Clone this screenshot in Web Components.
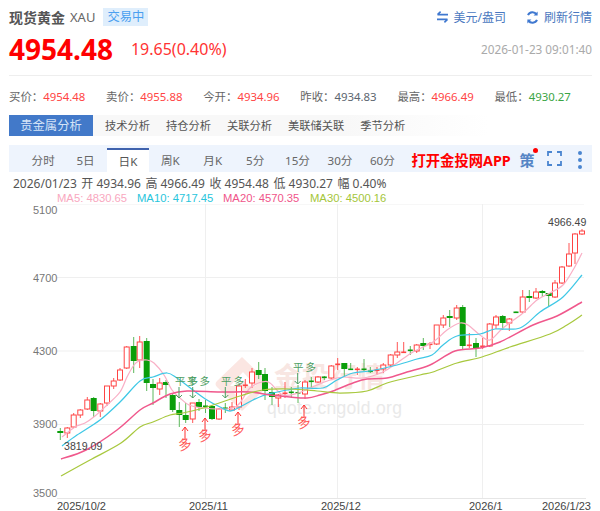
<!DOCTYPE html>
<html lang="zh">
<head>
<meta charset="utf-8">
<title>现货黄金</title>
<style>
  html, body { margin: 0; background: #fff; }
  body { width: 600px; height: 511px; overflow: hidden; font-family: "Noto Sans", "Noto Sans CJK SC", sans-serif; }
</style>
</head>
<body>
<quote-page>
  <quote-header></quote-header>
  <stat-row>
    <stat-item label="买价" value="4954.48" tone="up"></stat-item>
    <stat-item label="卖价" value="4955.88" tone="up"></stat-item>
    <stat-item label="今开" value="4934.96" tone="up"></stat-item>
    <stat-item label="昨收" value="4934.83"></stat-item>
    <stat-item label="最高" value="4966.49" tone="up"></stat-item>
    <stat-item label="最低" value="4930.27" tone="down"></stat-item>
  </stat-row>
  <analysis-tabs></analysis-tabs>
  <period-bar></period-bar>
  <kline-legend></kline-legend>
  <kline-chart></kline-chart>
</quote-page>
<script>
class quotePage extends HTMLElement {
    connectedCallback() {
        const shadowRoot = this.attachShadow({mode: 'open'});
        shadowRoot.innerHTML = `<style>
          :host{ display: block; width: 600px; height: 511px; }
        </style><slot></slot>`;
    }
}

class quoteHeader extends HTMLElement {
    connectedCallback() {
        const shadowRoot = this.attachShadow({mode: 'open'});
        shadowRoot.innerHTML = `<style>
          :host{ display: block; margin: 0 8px 0 9px; height: 75px; box-sizing: content-box; border-bottom: 1px solid #eee; }
          .top, .mid{ display: flex; align-items: center; }
          .top{ height: 18px; padding-top: 8px; }
          .mid{ height: 30px; padding-top: 8px; }
          .name{ font-size: 14px; font-weight: 700; color: #555; }
          .code{ font-size: 13px; color: #666; margin-left: 5px; }
          .badge{ font-size: 12.3px; color: #4a9ff0; background: #dfeefc; height: 18px; line-height: 18px; padding: 0 4px; margin-left: 8px; }
          .actions{ margin-left: auto; display: flex; align-items: center; font-size: 12px; color: #4a78c0; }
          .actions svg{ display: block; margin-right: 5px; }
          .actions span + svg{ margin-left: 20px; }
          .price{ font-size: 28px; font-weight: 700; color: #f00; line-height: 30px; }
          .change{ font-size: 16px; color: #f33; margin-left: 18px; }
          .time{ margin-left: auto; font-size: 11.75px; color: #aaa; }
        </style>
        <div class="top">
          <span class="name">现货黄金</span><span class="code">XAU</span><span class="badge">交易中</span>
          <div class="actions">
            <svg width="13" height="12" viewBox="0 0 13 12" fill="none" stroke="#3f78d0" stroke-width="1.6"><path d="M12 3.6H1.5M4.6 .6 1.5 3.6"/><path d="M1 8.4h10.5M8.4 11.4l3.1-3"/></svg>
            <span>美元/盎司</span>
            <svg width="13" height="13" viewBox="0 0 13 13" fill="none" stroke="#3f78d0" stroke-width="2"><path d="M2 4.2A5 5 0 0 1 10.6 3.4"/><path d="M11 8.8A5 5 0 0 1 2.4 9.6"/><path d="M11.6 .4v4.2H7.6z" fill="#3f78d0" stroke="none"/><path d="M1.4 12.6V8.4h4z" fill="#3f78d0" stroke="none"/></svg>
            <span>刷新行情</span>
          </div>
        </div>
        <div class="mid">
          <span class="price">4954.48</span><span class="change">19.65(0.40%)</span><span class="time">2026-01-23 09:01:40</span>
        </div>`;
    }
}

class statRow extends HTMLElement {
    connectedCallback() {
        const shadowRoot = this.attachShadow({mode: 'open'});
        shadowRoot.innerHTML = `<style>
          :host{ display: grid; grid-template-columns: repeat(6, 97.1px); margin-left: 9px; height: 39px; align-items: center; }
        </style><slot></slot>`;
    }
}

class statItem extends HTMLElement {
    connectedCallback() {
        const tones = { up: '#f44', down: '#3aa544' };
        const color = tones[this.getAttribute('tone')] || '#5c6670';
        const shadowRoot = this.attachShadow({mode: 'open'});
        shadowRoot.innerHTML = `<style>
          :host{ display: block; font-size: 11.4px; color: #666; white-space: nowrap; }
          b{ font-weight: 400; color: ${color}; }
        </style>${this.getAttribute('label')}：<b>${this.getAttribute('value')}</b>`;
    }
}

class analysisTabs extends HTMLElement {
    connectedCallback() {
        const tabs = ['技术分析', '持仓分析', '关联分析', '美联储关联', '季节分析'];
        const shadowRoot = this.attachShadow({mode: 'open'});
        shadowRoot.innerHTML = `<style>
          :host{ display: flex; margin-left: 9px; height: 21px; width: 480px; background: linear-gradient(90deg, #f8f8f8 70%, #fff); }
          .on{ width: 84px; background: #4279c9; color: #d5e4f7; font-size: 12.3px; line-height: 21px; text-align: center; margin-right: 12px; }
          .t{ font-size: 11.25px; line-height: 21px; color: #555; margin-right: 16px; white-space: nowrap; }
        </style>
        <div class="on">贵金属分析</div>${tabs.map(t => `<div class="t">${t}</div>`).join('')}`;
    }
}

class periodBar extends HTMLElement {
    connectedCallback() {
        const items = ['分时', '5日', '日K', '周K', '月K', '5分', '15分', '30分', '60分'];
        const shadowRoot = this.attachShadow({mode: 'open'});
        shadowRoot.innerHTML = `<style>
          :host{ display: flex; align-items: stretch; margin: 9px 8px 0 9px; height: 27px; padding-left: 13px; background: #eef4fd; font-size: 11.6px; color: #666; }
          .p{ width: 42.4px; text-align: center; line-height: 31px; box-sizing: border-box; }
          .p.on{ background: #fff; border-top: 2px solid #3f62ad; margin-top: 3px; line-height: 24px; color: #555; }
          .app{ margin-left: 8px; width: 108px; font-size: 14.3px; font-weight: 700; color: #f00; line-height: 31px; white-space: nowrap; }
          .ce{ position: relative; color: #5585c5; font-size: 15px; font-weight: 700; line-height: 31px; width: 27px; }
          .dot{ position: absolute; left: 13px; top: 3px; width: 5px; height: 5px; border-radius: 50%; background: #f00; }
          svg{ display: block; margin-top: 6px; }
        </style>
        ${items.map(t => `<div class="p${t === '日K' ? ' on' : ''}">${t}</div>`).join('')}
        <div class="app">打开金投网APP</div>
        <div class="ce">策<span class="dot"></span></div>
        <svg width="15" height="15" viewBox="0 0 15 15" fill="none" stroke="#4a85d0" stroke-width="1.8"><path d="M1 5V1h4M10 1h4v4M14 10v4h-4M5 14H1v-4"/></svg>
        <svg width="20" height="18" viewBox="0 0 20 18" fill="#4a85d0" style="margin-left:8px"><circle cx="10" cy="2" r="2"/><circle cx="10" cy="9" r="2"/><circle cx="10" cy="16" r="2"/></svg>`;
    }
}

class klineLegend extends HTMLElement {
    connectedCallback() {
        const shadowRoot = this.attachShadow({mode: 'open'});
        shadowRoot.innerHTML = `<style>
          :host{ display: block; height: 32px; box-sizing: border-box; padding-top: 4px; color: #555; white-space: nowrap; }
          .ohlc{ padding-left: 13px; font-size: 12px; line-height: 16px; display: flex; gap: 4.5px; }
          .ma{ position: relative; height: 12px; padding-left: 57px; display: flex; font: 11.25px/12px "Liberation Sans", sans-serif; }
          .ma span{ display: block; }
          .ma span:nth-child(1){ color: #f9a8c0; width: 80px; }
          .ma span:nth-child(2){ color: #28c5dc; width: 86px; }
          .ma span:nth-child(3){ color: #f0558a; width: 87px; }
          .ma span:nth-child(4){ color: #a4c639; }
        </style>
        <div class="ohlc"><span>2026/01/23</span><span>开 4934.96</span><span>高 4966.49</span><span>收 4954.48</span><span>低 4930.27</span><span>幅 0.40%</span></div>
        <div class="ma"><span>MA5: 4830.65</span><span>MA10: 4717.45</span><span>MA20: 4570.35</span><span>MA30: 4500.16</span></div>`;
    }
}

// x, wick top, body top, body bottom, wick bottom, colour. read off the picture in page pixels
const CANDLES = [
[60.3,428,431,433,440,'g'],[67.3,427,428,433,438,'r'],[73.7,413,415,427,428,'r'],[80.3,409,410,415,418,'r'],
[87.3,397,400,409,410,'r'],[93.7,397,398,411,417,'g'],[100.3,403,404,411,417,'r'],[107,386,386,403,406,'r'],
[113.7,378,381,386,389,'r'],[120,368,370,380,381,'r'],[126.7,346,347,368,369,'r'],[133.7,337,346,361,373,'g'],
[139.7,336,342,360,368,'r'],[146.7,338,341,383,391,'g'],[153,379,384,388,405,'g'],[159.7,378,383,389,395,'r'],
[166,380,382,385,398,'g'],[172.7,393,395,410,412,'g'],[179.3,402,410,415,427,'g'],[185.7,403,415,420,423,'g'],
[192.7,403,403,419,423,'r'],[199,399,402,407,411,'g'],[205.5,400,405.5,406.5,413,'g'],[212,405,406,419,420,'g'],
[219,408,409,419,420,'r'],[225.3,403,407.5,408.5,413,'g'],[232,402,407,410,411,'r'],[239,385,386,407,410,'r'],
[245.3,379,384.5,385.5,388,'r'],[252,368,372,383,388,'r'],[258.7,362,370,375,379,'g'],[265,368,374,391,400,'g'],
[272,387,392,397,405,'g'],[278.3,394,395,398,407,'r'],[285,382,392.5,393.5,398,'r'],[291.3,387,391.5,392.5,398,'g'],
[298,385,392,393,403,'g'],[305,380,382,394,399,'r'],[311.3,377,380.5,381.5,387,'g'],[318,376,377,382,383,'r'],
[324.3,376,376.5,377.5,380,'g'],[331.3,365,366,378,379,'r'],[337.7,358,363.5,364.5,370,'r'],[344.3,363,363,369,377,'g'],
[350.7,363,368.5,369.5,370,'g'],[357.3,367,368.5,369.5,375,'r'],[364,359,368.5,369.5,371,'g'],[370.3,367,370.5,371.5,373,'g'],
[377,367,369.5,370.5,375,'r'],[383.3,363,365,369,373,'r'],[390.7,354,355,365,366,'r'],[397.3,342,352,355,358,'r'],
[403.7,342,351.5,352.5,353,'r'],[410.3,346,349.5,350.5,355,'g'],[416.7,344,345,351,353,'r'],[423.3,338,343,346,350,'g'],
[430,342,343.5,344.5,349,'r'],[436.7,325,325,344,345,'r'],[443.3,315,318,325,328,'r'],[449.7,310,316,318,327,'g'],
[456.7,305,308,318,320,'r'],[462.7,305,307,346,350,'g'],[469.3,333,344.5,345.5,348,'r'],[476,338,343,348,357,'g'],
[482.7,338,345.5,346.5,349,'r'],[489.7,323,324,346,347,'r'],[496,315,317,325,329,'r'],[502.7,315,316,323,330,'g'],
[509.3,318,319,323,331,'r'],[516,311.5,311.5,312.5,312.5,'g'],[522.7,290,297,312,313,'r'],[529.3,290,296,298,302,'g'],
[536,288,292,298,299,'r'],[542.3,290,291,293,297,'g'],[548.7,293,293,296,307,'g'],[555,280,283,297,298,'r'],
[562,266,267,283,284,'r'],[569,243,254,266,267,'r'],[575,233,234,253,264,'r'],[582,229,231,234,235,'r']
];

const MA_LINES = {
  '#f9b0c6': [[62,437],[75,427],[85,423],[95,416],[107,405],[120,392],[127,377],[134,365],[139,361],[147,360],[154,363],[164,375],[172,390],[180,398],[189,405],[203,408],[220,409],[233,408],[240,403],[250,388],[262,382],[270,383],[283,395],[298,393],[310,388],[330,380],[343,377],[363,378],[383,372],[397,363],[413,352],[433,342],[447,330],[460,323],[468,325],[480,335],[490,340],[503,328],[523,313],[537,300],[550,293],[563,285],[573,270],[582,253]],
  '#3fc8e6': [[62,446],[77,435],[100,420],[120,402],[140,381],[153,377],[167,373],[177,378],[193,390],[207,400],[220,407],[230,411],[240,407],[253,400],[262,396],[273,393],[287,390],[300,388],[323,388],[337,380],[353,373],[370,371],[397,365],[417,359],[432,355],[443,345],[457,336],[480,334],[495,329],[520,328],[540,312],[563,297],[582,275]],
  '#f0588c': [[61,459],[86,450],[117,430],[140,410],[153,403],[170,394],[187,391],[220,392],[250,392],[270,395],[290,397],[307,398],[320,395],[333,391],[353,383],[367,379],[387,378],[407,372],[430,365],[455,351],[480,348],[500,342],[533,325],[557,316],[582,302]],
  '#a8c83e': [[61,476],[90,460],[121,443],[140,427],[153,422],[170,415],[183,413],[207,407],[240,396],[263,390],[290,389],[317,391],[340,393],[367,391],[387,383],[420,375],[433,372],[457,363],[482,357],[510,347],[550,334],[567,325],[582,315]]
};

// smooth a point list with catmull-rom handles
function smoothPath(pts) {
    let d = `M${pts[0][0]} ${pts[0][1]}`;
    for (let i = 0; i < pts.length - 1; i++) {
        const p0 = pts[i - 1] || pts[i], p1 = pts[i], p2 = pts[i + 1], p3 = pts[i + 2] || p2;
        const c1x = p1[0] + (p2[0] - p0[0]) / 6, c1y = p1[1] + (p2[1] - p0[1]) / 6;
        const c2x = p2[0] - (p3[0] - p1[0]) / 6, c2y = p2[1] - (p3[1] - p1[1]) / 6;
        d += `C${c1x.toFixed(1)} ${c1y.toFixed(1)} ${c2x.toFixed(1)} ${c2y.toFixed(1)} ${p2[0]} ${p2[1]}`;
    }
    return d;
}

class klineChart extends HTMLElement {
    connectedCallback() {
        // svg uses page coordinates, shifted by the 204px where the chart starts
        const grid = [204, 277.5, 351, 424.5].map(y => `<path d="M57 ${y}H584" stroke="#efefef"/>`).join('')
            + [205, 337, 482].map(x => `<path d="M${x}.5 204V498" stroke="#efefef"/>`).join('')
            + `<path d="M57 498.5H586" stroke="#e6e6e6"/>`;
        const yLabels = [[5100, 213.5], [4700, 282], [4300, 355], [3900, 428], [3500, 497]]
            .map(a => `<text x="33" y="${a[1]}" fill="#777" class="ax">${a[0]}</text>`).join('');
        const xLabels = [[57, '2025/10/2'], [189, '2025/11'], [321, '2025/12'], [469, '2026/1'], [542, '2026/1/23']]
            .map(a => `<text x="${a[0]}" y="510" fill="#444" class="ax">${a[1]}</text>`).join('');
        const candles = CANDLES.map(c => {
            const [x, wt, bt, bb, wb, k] = c;
            const wick = k === 'r' ? '#f55' : '#5cb85c';
            const body = k === 'r' ? '#f44' : '#0a9e0a';
            let s = `<path d="M${x} ${wt}V${wb}" stroke="${wick}" stroke-width="1"/>`;
            if (bb - bt < 2) s += `<rect x="${x - 2.5}" y="${bt}" width="5" height="1.6" fill="${body}"/>`;
            else if (k === 'r') s += `<rect x="${x - 2.5}" y="${bt}" width="5" height="${bb - bt}" fill="#fff" stroke="${body}" stroke-width="1"/>`;
            else s += `<rect x="${x - 3}" y="${bt}" width="6" height="${bb - bt}" fill="${body}"/>`;
            return s;
        }).join('');
        const lines = Object.keys(MA_LINES)
            .map(c => `<path d="${smoothPath(MA_LINES[c])}" fill="none" stroke="${c}" stroke-width="${c === '#f0588c' ? 1.5 : 1.25}"/>`).join('');
        const green = [[175, 385, 179], [187, 385, 192.7], [221, 385, 225.3], [293, 371, 297.7]].map(m => {
            const [tx, ty, ax] = m;
            return `<text x="${tx}" y="${ty}" class="mk" fill="#4c9e62">平多</text>
              <path d="M${ax} ${ty + 2}V${ty + 13}M${ax - 3} ${ty + 10}L${ax} ${ty + 13}L${ax + 3} ${ty + 10}" fill="none" stroke="#4c9e62"/>`;
        }).join('');
        const red = [[185, 427], [205, 418], [238, 412], [304, 405]].map(m => {
            const [x, y] = m;
            return `<path d="M${x} ${y + 12}V${y}M${x - 3} ${y + 4}L${x} ${y}L${x + 3} ${y + 4}" fill="none" stroke="#f33"/>
              <text transform="translate(${x + 1} ${y + 22}) rotate(-14)" text-anchor="middle" class="dn" fill="#f55">多</text>`;
        }).join('');
        const watermark = `
          <g transform="translate(242 384)">
            <path d="M0-27 25-3Q28 0 25 3L0 27-25 3Q-28 0-25-3Z" fill="#fbe6e2"/>
            <path d="M-12 2 1-12 14 2 7 2 1-4-5 2Z" fill="#fff"/>
            <path d="M-8 9H9L1 17Z" fill="#fff"/>
          </g>
          <text x="274" y="387" fill="#f8e6e2" font-size="27" font-weight="700" letter-spacing="1">金投行情</text>
          <text x="267" y="414" fill="#e9e9e9" font-size="17.5" font-family="'Liberation Sans', sans-serif" letter-spacing=".3">quote.cngold.org</text>`;
        const shadowRoot = this.attachShadow({mode: 'open'});
        shadowRoot.innerHTML = `<style>
          :host{ display: block; width: 600px; height: 307px; }
          svg{ display: block; font-family: "Noto Sans CJK SC", sans-serif; }
          .ax{ font: 11px "Liberation Sans", sans-serif; }
          .val{ font: 10.6px "Liberation Sans", sans-serif; fill: #444; }
          .mk{ font-size: 10.5px; letter-spacing: 2px; }
          .dn{ font-size: 13.5px; }
        </style>
        <svg width="600" height="307" viewBox="0 204 600 307">
          ${grid}${watermark}${yLabels}${xLabels}${candles}${lines}${green}${red}
          <text x="548" y="226" class="val">4966.49</text>
          <text x="64" y="450" class="val">3819.09</text>
        </svg>`;
    }
}

customElements.define('quote-page', quotePage);
customElements.define('quote-header', quoteHeader);
customElements.define('stat-row', statRow);
customElements.define('stat-item', statItem);
customElements.define('analysis-tabs', analysisTabs);
customElements.define('period-bar', periodBar);
customElements.define('kline-legend', klineLegend);
customElements.define('kline-chart', klineChart);
</script>
</body>
</html>
